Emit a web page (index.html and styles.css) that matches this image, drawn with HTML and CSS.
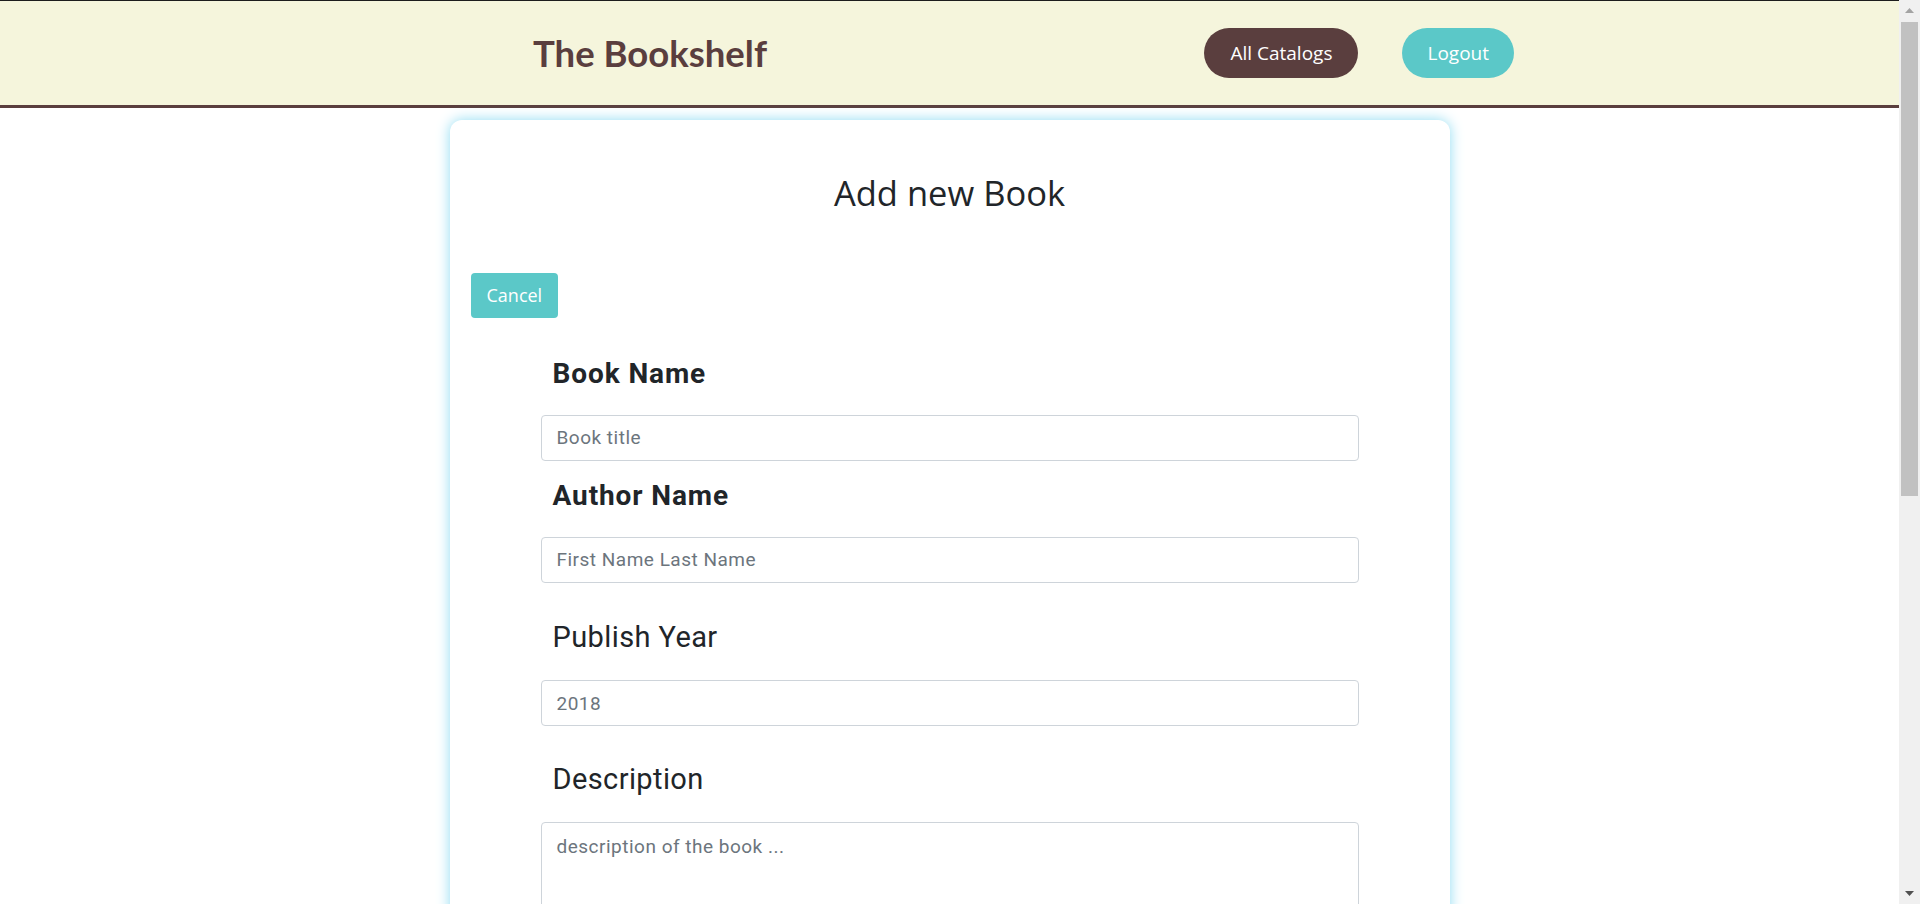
FILE: index.html
```html
<!DOCTYPE html>
<html lang="en">
<head>
<meta charset="utf-8">
<title>The Bookshelf</title>
<link rel="stylesheet" href="styles.css">
</head>
<body>
<header class="topbar">
  <div class="topbar-inner">
    <div class="brand">The Bookshelf</div>
    <nav class="nav">
      <a class="pill pill-dark" href="#">All Catalogs</a>
      <a class="pill pill-teal" href="#">Logout</a>
    </nav>
  </div>
</header>
<main class="card">
  <h1 class="card-title">Add new Book</h1>
  <div class="actions">
    <button class="btn-cancel" type="button">Cancel</button>
  </div>
  <form class="book-form">
    <label class="label-strong label-first" for="bookName">Book Name</label>
    <input class="field" id="bookName" type="text" placeholder="Book title">
    <label class="label-strong label-next" for="authorName">Author Name</label>
    <input class="field" id="authorName" type="text" placeholder="First Name Last Name">
    <label class="label-plain" for="year">Publish Year</label>
    <input class="field" id="year" type="text" placeholder="2018">
    <label class="label-plain label-desc" for="desc">Description</label>
    <textarea class="field field-area" id="desc" placeholder="description of the book ..."></textarea>
    <button class="btn-submit" type="submit">Add Book</button>
  </form>
</main>
<div class="scrollbar" aria-hidden="true">
  <div class="sb-btn">
    <svg width="9" height="5" viewBox="0 0 9 5"><path d="M0 5 L4.5 0 L9 5 Z" fill="#a3a3a3"/></svg>
  </div>
  <div class="sb-track">
    <div class="sb-thumb"></div>
  </div>
  <div class="sb-btn">
    <svg width="9" height="5" viewBox="0 0 9 5"><path d="M0 0 L4.5 5 L9 0 Z" fill="#505050"/></svg>
  </div>
</div>
</body>
</html>
```
FILE: styles.css
```css
html, body {
  padding: 0;
  background: #ffffff;
}

html {
  margin: 0;
}

body {
  margin: 0 21px 0 0;
  font-family: "Open Sans", "Noto Sans", sans-serif;
  color: #212529;
}

/* fake classic scrollbar (window chrome lying over the page edge) */
.scrollbar {
  position: fixed;
  top: 0;
  right: 0;
  width: 21px;
  height: 100vh;
  background: #f0f0f0;
  display: flex;
  flex-direction: column;
}

.sb-btn {
  height: 21px;
  flex: 0 0 21px;
  display: flex;
  align-items: center;
  justify-content: center;
}

.sb-track {
  flex: 1;
  padding: 1px 2px 0;
}

.sb-thumb {
  height: 474px;
  background: #c1c1c1;
}

.topbar {
  background: #f5f5dc;
  border-top: 1px solid #1c1c1c;
  border-bottom: 3px solid #5a3e3e;
  height: 104px;
  display: flex;
  align-items: center;
}

.topbar-inner {
  width: 981px;
  margin-left: 533px;
  display: flex;
  align-items: center;
  justify-content: space-between;
}

.brand {
  font-family: "Lato", sans-serif;
  font-weight: 700;
  font-size: 36.5px;
  color: #5a3e3e;
}

.nav {
  display: flex;
  gap: 44px;
}

.pill {
  display: inline-flex;
  align-items: center;
  justify-content: center;
  height: 50px;
  padding: 0 26px;
  border-radius: 25px;
  color: #ffffff;
  text-decoration: none;
  font-size: 19px;
}

.pill-dark {
  background: #5a3e3e;
}

.pill-teal {
  background: #5bc8c8;
  padding: 0 25px;
}

.card {
  display: block;
  width: 1000px;
  min-height: 1504px;
  margin: 12px auto 20px;
  box-sizing: border-box;
  padding: 20px 21px 60px;
  background: #ffffff;
  border-radius: 12px;
  box-shadow: 0 0 14px #8fdcf2;
}

.card-title {
  margin: 32px 0 0;
  text-align: center;
  font-size: 34.5px;
  font-weight: 500;
  line-height: 1.2;
  color: #212529;
}

.actions {
  margin-top: 60px;
}

.btn-cancel {
  font-family: "Open Sans", sans-serif;
  font-size: 18px;
  line-height: 27px;
  padding: 9px 16px;
  border: none;
  border-radius: 4px;
  background: #5bc8c8;
  color: #ffffff;
}

.book-form {
  width: 818px;
  margin: 0 auto;
  display: flex;
  flex-direction: column;
  font-family: "Roboto", sans-serif;
}

.label-strong,
.label-plain {
  display: block;
  padding-left: 12px;
  line-height: 1.2;
  color: #212529;
  margin-bottom: 24px;
}

.label-strong {
  font-size: 28px;
  font-weight: 700;
  letter-spacing: 0.9px;
}

.label-first {
  margin-top: 39px;
}

.label-next {
  margin-top: 18px;
}

.label-plain {
  font-size: 29px;
  font-weight: 400;
  letter-spacing: 0.4px;
  margin-top: 37px;
  margin-bottom: 26px;
}

.label-desc {
  margin-top: 36px;
  margin-bottom: 25px;
}

.field {
  display: block;
  box-sizing: border-box;
  width: 100%;
  height: 46px;
  padding: 0 15px;
  border: 1px solid #ced4da;
  border-radius: 4px;
  font-family: "Roboto", sans-serif;
  font-size: 19px;
  letter-spacing: 0.5px;
  color: #495057;
  background: #ffffff;
}

.field::placeholder {
  color: #6c757d;
}

.field-area {
  height: 150px;
  padding: 12px 15px;
  resize: vertical;
}

.btn-submit {
  align-self: flex-start;
  margin-top: 30px;
  font-family: "Open Sans", sans-serif;
  font-size: 18px;
  line-height: 27px;
  padding: 9px 16px;
  border: none;
  border-radius: 4px;
  background: #5bc8c8;
  color: #ffffff;
}
```
